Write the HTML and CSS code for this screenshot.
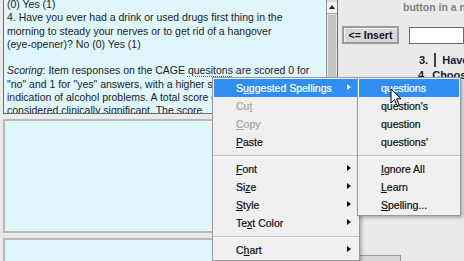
FILE: index.html
```html
<!DOCTYPE html>
<html lang="en">
<head>
    <meta charset="UTF-8">
    <title>CAGE questionnaire editor</title>
    <link rel="stylesheet" href="styles.css">
</head>
<body>

<div class="page">
    <div class="left">
        <div class="editor editor-top">
            <div class="editor-text">
                (0) Yes (1)<br>
                4. Have you ever had a drink or used drugs first thing in the<br>
                morning to steady your nerves or to get rid of a hangover<br>
                (eye-opener)? No (0) Yes (1)<br>
                <br>
                <i>Scoring</i>: Item responses on the CAGE <span class="misspelled">quesitons</span> are scored 0 for<br>
                "no" and 1 for "yes" answers, with a higher score an overall<br>
                indication of alcohol problems. A total score of 2 or greater is<br>
                considered clinically significant. The score
            </div>
            <div class="scrollbar">
                <div class="scroll-up"></div>
                <div class="scroll-thumb"></div>
            </div>
        </div>
        <div class="editor editor-mid"></div>
        <div class="editor editor-low">
            <div class="editor-fill"></div>
            <div class="scrollbar"></div>
        </div>
    </div>

    <div class="right">
        <div class="hint">button in a new line</div>
        <div class="insert-row">
            <button class="insert-btn">&lt;= Insert</button>
            <input class="insert-input" type="text">
        </div>
        <div class="question-row">
            <span class="num">3.</span>
            <span class="check"></span>
            <span class="q-text">Have you</span>
        </div>
        <div class="question-row q4">
            <span class="num">4.</span>
            <span class="q-text">Choose</span>
        </div>
        <div class="bottom-btn"></div>
    </div>
</div>

<div class="menu">
    <div class="item active">S<u>u</u>ggested Spellings<span class="arrow"></span></div>
    <div class="item disabled">Cu<u>t</u></div>
    <div class="item disabled"><u>C</u>opy</div>
    <div class="item"><u>P</u>aste</div>
    <div class="sep"></div>
    <div class="item"><u>F</u>ont<span class="arrow"></span></div>
    <div class="item">Si<u>z</u>e<span class="arrow"></span></div>
    <div class="item"><u>S</u>tyle<span class="arrow"></span></div>
    <div class="item">Te<u>x</u>t Color<span class="arrow"></span></div>
    <div class="sep"></div>
    <div class="item">C<u>h</u>art<span class="arrow"></span></div>
</div>

<div class="menu submenu">
    <div class="item active">questions</div>
    <div class="item">question's</div>
    <div class="item">question</div>
    <div class="item">questions'</div>
    <div class="sep"></div>
    <div class="item"><u>I</u>gnore All</div>
    <div class="item"><u>L</u>earn</div>
    <div class="item"><u>S</u>pelling...</div>
</div>

<svg class="cursor" width="12" height="19" viewBox="0 0 12 19">
    <path d="M1 1 L1 15 L4.5 11.5 L7 17.5 L9 16.6 L6.6 10.8 L11 10.8 Z" fill="#fff" stroke="#000" stroke-width="1"/>
</svg>

</body>
</html>
```

FILE: styles.css
```css
body {
    margin: 0;
    padding: 0;
    width: 464px;
    height: 261px;
    overflow: hidden;
    background-color: #ebeaea;
    font-family: "Liberation Sans", Arial, sans-serif;
    position: relative;
}

.page {
    display: flex;
    height: 261px;
    padding-left: 3px;
}

/* left column: the editors */

.left {
    width: 335px;
    display: flex;
    flex-direction: column;
    gap: 5px;
}

.editor {
    display: flex;
    background-color: #dff6fa;
    border: 1px solid #a8a8a8;
    box-sizing: border-box;
    overflow: hidden;
}

.editor-top {
    height: 114px;
    border-top: none;
    border-color: #6c6c6c;
}

.editor-mid {
    height: 114px;
    border: 2px solid #b9b9b9;
}

.editor-low {
    flex: 1;
    border: 2px solid #b9b9b9;
    border-bottom: none;
}

.editor-fill {
    flex: 1;
}

.editor-text {
    flex: 1;
    margin-top: -2px;
    padding-left: 3px;
    font-size: 10.5px;
    line-height: 13.3px;
    color: #1c1c28;
    white-space: nowrap;
    overflow: hidden;
}

.misspelled {
    text-decoration: underline dotted #d03838;
}

.scrollbar {
    width: 10px;
    display: flex;
    flex-direction: column;
    background-color: #d8d8d8;
    border-left: 1px solid #9a9a9a;
}

.scroll-up {
    height: 11px;
    margin-top: 2px;
    background-color: #f2f2f2;
    border-bottom: 1px solid #a0a0a0;
    position: relative;
}

.scroll-up::after {
    content: "";
    position: absolute;
    left: 2px;
    top: 3px;
    border-left: 3px solid transparent;
    border-right: 3px solid transparent;
    border-bottom: 4px solid #222;
}

.scroll-thumb {
    flex: 1;
    background-color: #c3c3c3;
    border: 1px solid #e4e4e4;
}

/* right column */

.right {
    flex: 1;
    display: flex;
    flex-direction: column;
    padding-left: 4px;
    overflow: hidden;
}

.hint {
    padding-left: 61px;
    height: 26px;
    font-size: 10.5px;
    font-weight: bold;
    line-height: 14px;
    color: #808080;
    white-space: nowrap;
}

.insert-row {
    display: flex;
    align-items: center;
    gap: 10px;
}

.insert-btn {
    width: 57px;
    height: 18px;
    padding: 0;
    font-family: "Liberation Sans", Arial, sans-serif;
    font-size: 10.5px;
    font-weight: bold;
    color: #111;
    background-color: #d8d8d8;
    border: 2px solid #9b9b9b;
    box-shadow: inset 1px 1px 0 #f4f4f4;
}

.insert-input {
    flex: 1;
    height: 17px;
    box-sizing: border-box;
    border: 1px solid #6a6a6a;
    background-color: #fff;
    min-width: 0;
}

.question-row {
    display: flex;
    align-items: center;
    margin-top: 9px;
    padding-left: 77px;
    font-size: 11px;
    font-weight: bold;
    color: #1a1a30;
    white-space: nowrap;
}

.check {
    width: 12px;
    height: 12px;
    margin: 0 6px 0 6px;
    background-color: #dff6fa;
    border: 1px solid #444;
}

.q4 {
    margin-top: 2px;
    padding-left: 76px;
}

.q4 .num {
    margin-right: 5px;
}

.bottom-btn {
    margin-top: auto;
    width: 57px;
    height: 5px;
    background-color: #d8d8d8;
    border: 1px solid #9b9b9b;
    border-bottom: none;
}

/* context menu */

.menu {
    position: absolute;
    left: 212px;
    top: 77px;
    width: 146px;
    padding: 1px 0;
    background-color: #f0f0f0;
    border: 1px solid #999;
    box-shadow: 2px 2px 3px rgba(0, 0, 0, 0.25);
    font-size: 10.5px;
    color: #0e0e0e;
    -webkit-text-stroke: 0.2px;
}

.submenu {
    left: 357px;
    width: 102px;
}

.item {
    position: relative;
    height: 18px;
    line-height: 18px;
    padding-left: 22px;
    margin: 0 1px;
    white-space: nowrap;
}

.item.active {
    background-color: #2f8ff0;
    color: #fff;
}

.item.disabled {
    color: #a2a2a2;
}

.arrow {
    position: absolute;
    right: 7px;
    top: 5px;
    border-top: 3.5px solid transparent;
    border-bottom: 3.5px solid transparent;
    border-left: 4px solid #111;
}

.item.active .arrow {
    border-left-color: #fff;
}

.sep {
    height: 1px;
    margin: 4px 0 3px 0;
    background-color: #bdbdbd;
    border-bottom: 1px solid #fff;
}

.cursor {
    position: absolute;
    left: 390px;
    top: 88px;
}
```
